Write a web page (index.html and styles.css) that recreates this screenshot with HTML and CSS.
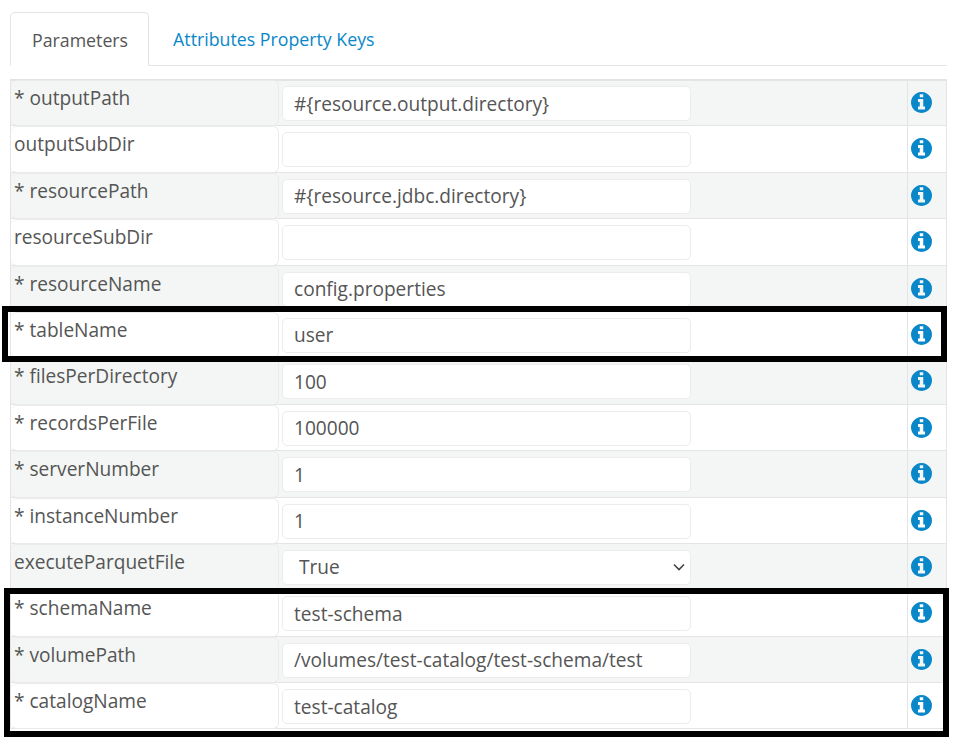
FILE: index.html
```html
<!DOCTYPE html>
<html lang="en">
<head>
    <meta charset="UTF-8" />
    <title>Parameters</title>
    <link rel="stylesheet" href="styles.css">
</head>
<body>
    <svg class="defs" width="0" height="0">
        <symbol id="info" viewBox="128 128 1536 1536">
            <path d="M1152 1376v-160q0-14-9-23t-23-9h-96v-512q0-14-9-23t-23-9h-320q-14 0-23 9t-9 23v160q0 14 9 23t23 9h96v320h-96q-14 0-23 9t-9 23v160q0 14 9 23t23 9h448q14 0 23-9t9-23zm-128-896v-160q0-14-9-23t-23-9h-192q-14 0-23 9t-9 23v160q0 14 9 23t23 9h192q14 0 23-9t9-23zm640 416q0 209-103 385.5t-279.5 279.5-385.5 103-385.5-103-279.5-279.5-103-385.5 103-385.5 279.5-279.5 385.5-103 385.5 103 279.5 279.5 103 385.5z"/>
        </symbol>
    </svg>

    <div class="tabs">
        <a class="tab active">Parameters</a>
        <a class="tab">Attributes Property Keys</a>
    </div>

    <div class="params">
        <div class="row">
            <label>* outputPath</label>
            <div class="field"><input type="text" value="#{resource.output.directory}"></div>
            <div class="help"><svg><use href="#info"/></svg></div>
        </div>
        <div class="row">
            <label>outputSubDir</label>
            <div class="field"><input type="text" value=""></div>
            <div class="help"><svg><use href="#info"/></svg></div>
        </div>
        <div class="row">
            <label>* resourcePath</label>
            <div class="field"><input type="text" value="#{resource.jdbc.directory}"></div>
            <div class="help"><svg><use href="#info"/></svg></div>
        </div>
        <div class="row">
            <label>resourceSubDir</label>
            <div class="field"><input type="text" value=""></div>
            <div class="help"><svg><use href="#info"/></svg></div>
        </div>
        <div class="row">
            <label>* resourceName</label>
            <div class="field"><input type="text" value="config.properties"></div>
            <div class="help"><svg><use href="#info"/></svg></div>
        </div>
        <div class="row">
            <label>* tableName</label>
            <div class="field"><input type="text" value="user"></div>
            <div class="help"><svg><use href="#info"/></svg></div>
        </div>
        <div class="row">
            <label>* filesPerDirectory</label>
            <div class="field"><input type="text" value="100"></div>
            <div class="help"><svg><use href="#info"/></svg></div>
        </div>
        <div class="row">
            <label>* recordsPerFile</label>
            <div class="field"><input type="text" value="100000"></div>
            <div class="help"><svg><use href="#info"/></svg></div>
        </div>
        <div class="row">
            <label>* serverNumber</label>
            <div class="field"><input type="text" value="1"></div>
            <div class="help"><svg><use href="#info"/></svg></div>
        </div>
        <div class="row">
            <label>* instanceNumber</label>
            <div class="field"><input type="text" value="1"></div>
            <div class="help"><svg><use href="#info"/></svg></div>
        </div>
        <div class="row">
            <label>executeParquetFile</label>
            <div class="field"><select><option>True</option><option>False</option></select></div>
            <div class="help"><svg><use href="#info"/></svg></div>
        </div>
        <div class="row">
            <label>* schemaName</label>
            <div class="field"><input type="text" value="test-schema"></div>
            <div class="help"><svg><use href="#info"/></svg></div>
        </div>
        <div class="row">
            <label>* volumePath</label>
            <div class="field"><input type="text" value="/volumes/test-catalog/test-schema/test"></div>
            <div class="help"><svg><use href="#info"/></svg></div>
        </div>
        <div class="row">
            <label>* catalogName</label>
            <div class="field"><input type="text" value="test-catalog"></div>
            <div class="help"><svg><use href="#info"/></svg></div>
        </div>

        <!-- annotation boxes drawn over the table -->
        <div class="mark mark-table"></div>
        <div class="mark mark-unity"></div>
    </div>
</body>
</html>
```

FILE: styles.css
```css
* {
    box-sizing: border-box;
    font-family: 'Open Sans', sans-serif;
}

body {
    margin: 0;
    min-height: 742px;
    padding: 12px 8px 0 10px;
    background: #fff;
    color: #555;
    font-size: 19.1px;
}

.defs {
    position: absolute;
}

.tabs {
    display: flex;
    height: 54px;
    border-bottom: 1px solid #e4e4e4;
    font-size: 17.75px;
}

.tab {
    padding: 14px 20px 0 21px;
    height: 54px;
    line-height: 26px;
    color: #0a87c9;
}

.tab.active {
    color: #555;
    background: #fff;
    border: 1px solid #e4e4e4;
    border-bottom-color: #fff;
    border-radius: 5px 5px 0 0;
}

.tab + .tab {
    padding-left: 24px;
}

.params {
    position: relative;
    margin-top: 13px;
    width: 937px;
    border-top: 1px solid #e2e2e2;
    border-left: 1px solid #e4e4e4;
    border-right: 1px solid #e4e4e4;
}

.row {
    display: grid;
    grid-template-columns: 268px 628px 1fr;
    height: 46.4px;
    border-bottom: 1px solid #e4e4e4;
}

.row:first-child {
    box-shadow: inset 0 1px #e4e4e4;
}

.row:nth-child(odd) {
    background: #f3f6f4;
}

.row label {
    margin-bottom: -1px;
    padding: 4px 3px 0 3px;
    line-height: 26px;
    border: 1px solid #ebebeb;
    border-left: 0;
    border-radius: 6px;
}

.field {
    padding: 6px 0 0 3px;
}

.field input,
.field select {
    display: block;
    width: 409px;
    height: 35px;
    padding: 0 11px;
    background: #fff;
    border: 1px solid #ececec;
    border-radius: 5px;
    color: #555;
    font-size: 19.1px;
    outline: none;
}

.field select {
    padding: 0 16px;
    appearance: none;
    background: #fff url("data:image/svg+xml,%3Csvg xmlns='http://www.w3.org/2000/svg' viewBox='0 0 12 8'%3E%3Cpath d='M1 1.5l5 5 5-5' fill='none' stroke='%23444' stroke-width='1.6'/%3E%3C/svg%3E") no-repeat right 5px center / 12px 8px;
}

.help {
    padding: 12px 0 0 3px;
    border-left: 1px solid #e4e4e4;
}

.help svg {
    display: block;
    width: 21px;
    height: 21px;
    fill: #0a87c9;
}

.mark {
    position: absolute;
    border: 6px solid #000;
    pointer-events: none;
}

.mark-table {
    left: -9px;
    top: 226px;
    width: 945px;
    height: 56px;
}

.mark-unity {
    left: -7px;
    top: 508px;
    width: 945px;
    height: 149px;
}
```
